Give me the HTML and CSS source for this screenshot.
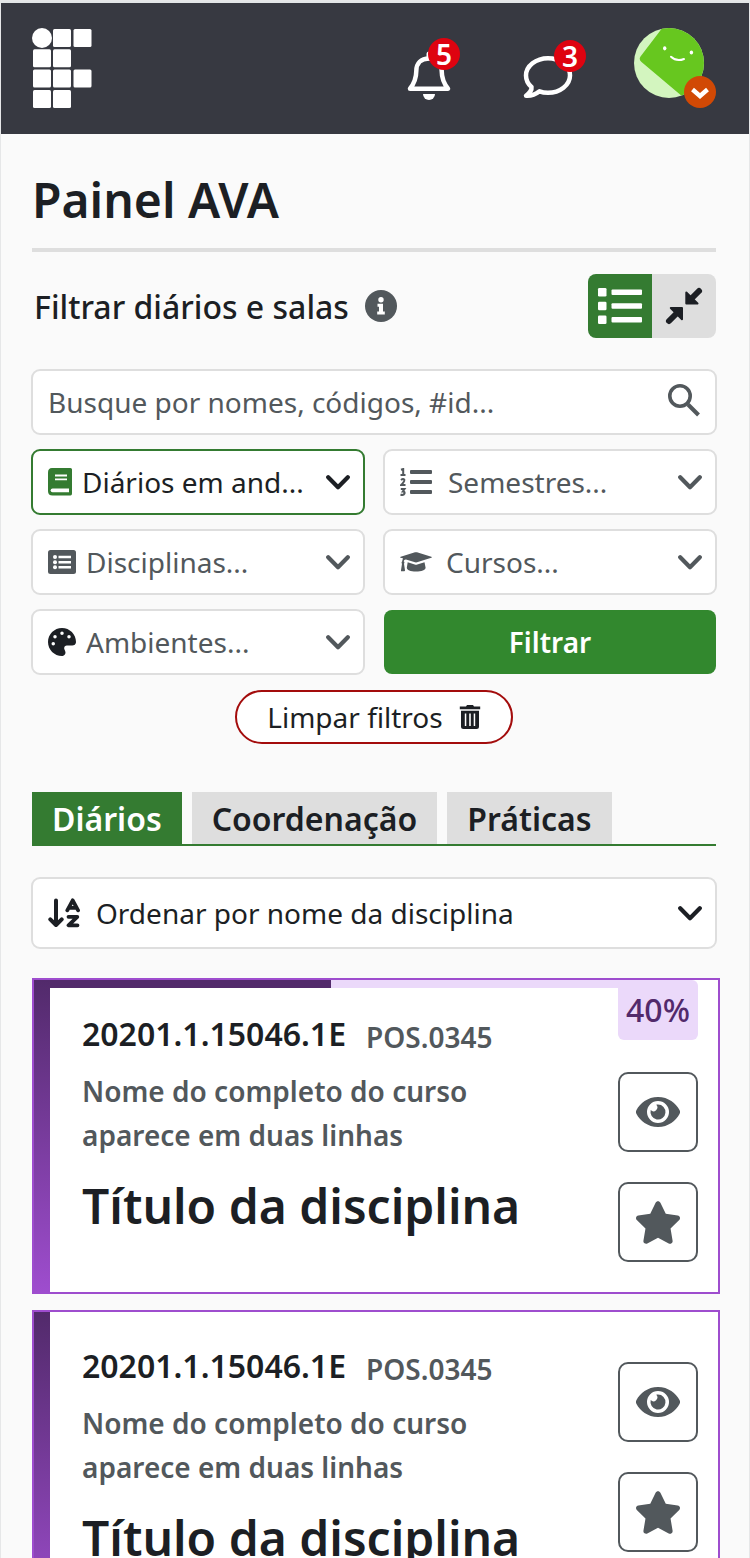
FILE: index.html
```html
<!DOCTYPE html>
<html lang="pt-BR">
<head>
<meta charset="utf-8">
<meta name="viewport" content="width=device-width, initial-scale=1">
<title>Painel AVA</title>
<link rel="stylesheet" href="styles.css">
</head>
<body>
<svg class="sprite" aria-hidden="true">
  <symbol id="chevron" viewBox="0 0 24 15"><path d="M2.200 2.300 12 12.200 21.800 2.300" fill="none" stroke="currentColor" stroke-width="4.200" stroke-linecap="round" stroke-linejoin="round"/></symbol>
  <symbol id="eye" viewBox="0 0 44 30"><path fill="currentColor" fill-rule="evenodd" d="M22 0C11.500 0 4 6.500.500 13a4.300 4.300 0 0 0 0 4C4 23.500 11.500 30 22 30s18-6.500 21.500-13a4.300 4.300 0 0 0 0-4C40 6.500 32.500 0 22 0Zm0 26a11 11 0 1 1 0-22 11 11 0 0 1 0 22Z"/><path fill="currentColor" d="M22 7.500a7.500 7.500 0 1 1-7.300 5.600 3.800 3.800 0 0 0 5.500-5.300c.6-.2 1.200-.3 1.800-.3Z"/></symbol>
  <symbol id="star" viewBox="0 0 576 512"><path fill="currentColor" d="M316.900 18C311.600 7 300.400 0 288.100 0s-23.400 7-28.800 18L195 150.300 51.400 171.500c-12 1.800-22 10.200-25.700 21.700s-.7 24.200 7.900 32.700L137.800 329 113.200 474.700c-2 12 3 24.200 12.900 31.300s23 8 33.800 2.300l128.300-68.500 128.300 68.500c10.800 5.700 23.900 4.900 33.800-2.300s14.900-19.300 12.900-31.300L438.500 329 542.700 225.900c8.600-8.500 11.700-21.200 7.900-32.700s-13.700-19.900-25.700-21.700L381.200 150.300 316.900 18z"/></symbol>
</svg>

<div class="app">
  <header class="topbar">
    <a class="logo" href="#" aria-label="Início">
      <svg width="60" height="80" viewBox="0 0 60 80" fill="#fff">
        <circle cx="10" cy="10" r="10"/>
        <rect x="21" y="1" width="18" height="18" rx="1.500"/><rect x="41.500" y="1" width="18" height="18" rx="1.500"/>
        <rect x="1" y="21.300" width="18" height="18" rx="1.500"/><rect x="21" y="21.300" width="18" height="18" rx="1.500"/>
        <rect x="1" y="41.600" width="18" height="18" rx="1.500"/><rect x="21" y="41.600" width="18" height="18" rx="1.500"/><rect x="41.500" y="41.600" width="18" height="18" rx="1.500"/>
        <rect x="1" y="62" width="18" height="18" rx="1.500"/><rect x="21" y="62" width="18" height="18" rx="1.500"/>
      </svg>
    </a>
    <nav class="actions" aria-label="Conta">
      <button class="action" type="button" aria-label="Notificações">
        <svg width="66" height="80" viewBox="0 0 66 80" fill="none">
          <path d="M4 60.700C8.500 55 10.300 50 10.300 43 10.300 35 15 30.500 23 30.500S35.700 35 35.700 43C35.700 50 37.500 55 42 60.700Z" stroke="#fff" stroke-width="4.500" stroke-linejoin="round"/>
          <path d="M23 30V26" stroke="#fff" stroke-width="5" stroke-linecap="round"/>
          <path d="M17 66h12a6 6 0 0 1-12 0Z" fill="#fff"/>
        </svg>
        <span class="count count-bell">5</span>
      </button>
      <button class="action" type="button" aria-label="Mensagens">
        <svg width="66" height="80" viewBox="0 0 66 80" fill="none">
          <path d="M11.500 59C8 56 6 52 6 47.500 6 38 16 30.200 28 30.200S50 38 50 47.500 40 64.800 28 64.800C25 64.800 22 64.300 19.500 63.300 15.500 66.500 10.500 68 6 67.700 9 65.500 12 62.500 11.500 59Z" stroke="#fff" stroke-width="4.500" stroke-linejoin="round"/>
        </svg>
        <span class="count count-chat">3</span>
      </button>
      <button class="profile" type="button" aria-label="Perfil">
        <svg width="82" height="80" viewBox="0 0 82 80">
          <defs><clipPath id="face"><circle cx="35" cy="35" r="35"/></clipPath></defs>
          <g clip-path="url(#face)">
            <rect width="70" height="70" fill="#d3f5bf"/>
            <path d="M29-1 6.500 28.500Q4.500 31.500 7.500 34L49 69H72V-1Z" fill="#67c71f"/>
          </g>
          <ellipse cx="30.700" cy="20.300" rx="1.700" ry="2.100" fill="#fff"/><ellipse cx="57.400" cy="24.500" rx="1.700" ry="2.100" fill="#fff"/>
          <path d="M37 28.800Q42.500 34 50 31" fill="none" stroke="#fff" stroke-width="2" stroke-linecap="round"/>
          <circle cx="66" cy="64" r="16" fill="#d14905"/>
          <path d="M58.500 61.500 66 68 73.500 61.500" fill="none" stroke="#fff" stroke-width="4.400"/>
        </svg>
      </button>
    </nav>
  </header>

  <main class="content">
    <h1 class="page-title">Painel AVA</h1>

    <div class="filter-head">
      <h2 class="filter-title">Filtrar diários e salas</h2>
      <button class="info" type="button" aria-label="Informações">
        <svg width="32" height="32" viewBox="0 0 32 32"><circle cx="16" cy="16" r="16" fill="#52585c"/><circle cx="16" cy="9.800" r="2.700" fill="#fff"/><path d="M12.500 13.800H18V21.500H19.800V24.600H12.200V21.500H14V16.800H12.500Z" fill="#fff"/></svg>
      </button>
      <div class="view-toggle" role="group" aria-label="Modo de exibição">
        <button class="view is-active" type="button" aria-label="Lista" aria-pressed="true">
          <svg width="64" height="64" viewBox="0 0 64 64" fill="#fff"><rect x="10" y="14" width="8.500" height="8.500" rx="1.300"/><rect x="10" y="27.800" width="8.500" height="8.500" rx="1.300"/><rect x="10" y="41.500" width="8.500" height="8.500" rx="1.300"/><rect x="23.500" y="15.500" width="30.500" height="5.500" rx="1"/><rect x="23.500" y="29.300" width="30.500" height="5.500" rx="1"/><rect x="23.500" y="43" width="30.500" height="5.500" rx="1"/></svg>
        </button>
        <button class="view" type="button" aria-label="Compacto" aria-pressed="false">
          <svg width="64" height="64" viewBox="0 0 64 64" fill="#1c1f24" stroke="#1c1f24"><path d="M34.300 18.500 45.500 29.500H34.300Z" stroke-width="2" stroke-linejoin="round"/><path d="M38.500 25.500 47 17" stroke-width="6" stroke-linecap="round"/><path d="M30 34V45.200L18.800 34Z" stroke-width="2" stroke-linejoin="round"/><path d="M25.500 38.500 17 47" stroke-width="6" stroke-linecap="round"/></svg>
        </button>
      </div>
    </div>

    <form class="filters" onsubmit="return false">
      <label class="field search">
        <input class="control" type="search" aria-label="Buscar" placeholder="Busque por nomes, códigos, #id...">
        <svg class="icon" width="34" height="36" viewBox="0 0 34 36" fill="none" stroke="currentColor"><circle cx="12" cy="12" r="10.200" stroke-width="3.600"/><path d="M20 20.500 30.500 31" stroke-width="4"/></svg>
      </label>
      <label class="field is-selected">
        <svg class="icon book" width="24" height="28" viewBox="0 0 24 28"><path fill="currentColor" d="M4 0H22.500Q24 0 24 1.500V25.500Q24 27.500 22.500 27.500H4.500Q0 27.500 0 23V4.500Q0 0 4 0Z"/><path d="M7 7.500H19M7 11.300H19" stroke="#fff" stroke-width="1.800"/><path d="M4.500 20.500H21V24.200H4.500A1.850 1.850 0 0 1 4.500 20.500Z" fill="#fff"/></svg>
        <select class="control" aria-label="Situação"><option>Diários em and...</option></select>
        <svg class="chevron" width="24" height="15"><use href="#chevron"/></svg>
      </label>
      <label class="field">
        <svg class="icon wider" width="32" height="28" viewBox="0 0 32 28" fill="currentColor"><rect x="10" y="2" width="22" height="4" rx="1"/><rect x="10" y="12" width="22" height="4" rx="1"/><rect x="10" y="22" width="22" height="4" rx="1"/><path d="M1 1.800 3.200 1V7M.500 7H5.500M1 12Q3 10.300 4.200 11.500 5 13 1.200 17H5.500M.800 21H4.500L2.800 23.500Q5 23.500 4.500 25.500 3.500 27.700.500 26.500" fill="none" stroke="currentColor" stroke-width="2"/></svg>
        <select class="control" aria-label="Semestres"><option>Semestres...</option></select>
        <svg class="chevron" width="24" height="15"><use href="#chevron"/></svg>
      </label>
      <label class="field">
        <svg class="icon" width="28" height="24" viewBox="0 0 28 24"><rect width="28" height="24" rx="2.500" fill="currentColor"/><path d="M10.500 7H23M10.500 12.200H23M10.500 17.300H23" stroke="#fff" stroke-width="2.600"/><g fill="#fff"><circle cx="7" cy="7" r="2"/><circle cx="7" cy="12.200" r="2"/><circle cx="7" cy="17.300" r="2"/></g></svg>
        <select class="control" aria-label="Disciplinas"><option>Disciplinas...</option></select>
        <svg class="chevron" width="24" height="15"><use href="#chevron"/></svg>
      </label>
      <label class="field">
        <svg class="icon wide" width="32" height="20" viewBox="0 0 32 20" fill="currentColor"><path d="M15 .300Q16 0 17 .300L31.300 4.700Q32.500 5.200 31.300 5.700L17 10.300Q16 10.600 15 10.300L6 7.500Q4 7.300 3.700 9.300 5 10.300 4 11.800L5 18.300Q5.100 19.300 4.200 19.300H1.500Q.800 19.300 1 18.300L2 11.800Q1 10.500 2.200 9.300 2.200 7.500 3.200 6.500L.700 5.700Q-.500 5.200.700 4.700Z"/><path d="M7.700 10.300 14.700 12.500Q16 12.900 17.300 12.500L24.500 10.300 25.600 15.800C25.600 18 21.500 19.600 16 19.600S6.800 18 6.800 15.800Z"/></svg>
        <select class="control" aria-label="Cursos"><option>Cursos...</option></select>
        <svg class="chevron" width="24" height="15"><use href="#chevron"/></svg>
      </label>
      <label class="field">
        <svg class="icon dark" width="28" height="28" viewBox="0 0 512 512"><path fill="currentColor" d="M512 256c0 .900 0 1.800 0 2.700c-.4 36.500-33.600 61.300-70.100 61.300L344 320c-26.500 0-48 21.500-48 48c0 3.400 .4 6.700 1 9.900c2.100 10.200 6.500 20 10.800 29.900c6.100 13.800 12.100 27.500 12.100 42c0 31.800-21.600 60.700-53.400 62c-3.500 .1-7 .2-10.600 .2C114.600 512 0 397.400 0 256S114.600 0 256 0S512 114.600 512 256zM128 288a32 32 0 1 0 -64 0 32 32 0 1 0 64 0zm0-96a32 32 0 1 0 0-64 32 32 0 1 0 0 64zM288 96a32 32 0 1 0 -64 0 32 32 0 1 0 64 0zm96 96a32 32 0 1 0 0-64 32 32 0 1 0 0 64z"/></svg>
        <select class="control" aria-label="Ambientes"><option>Ambientes...</option></select>
        <svg class="chevron" width="24" height="15"><use href="#chevron"/></svg>
      </label>
      <button class="submit" type="submit">Filtrar</button>
      <button class="clear" type="reset">Limpar filtros
        <svg width="22" height="24" viewBox="0 0 22 24" fill="#1c1f24"><path d="M.800 1.500H7L8 0H14L15 1.500H21.200V4.200H.800Z"/><path fill-rule="evenodd" d="M2 5.700H20V21.500Q20 24 17.500 24H4.500Q2 24 2 21.500ZM5.800 8.500V21H7.300V8.500ZM10.200 8.500V21H11.800V8.500ZM14.700 8.500V21H16.200V8.500Z"/></svg>
      </button>
    </form>

    <div class="tabs" role="tablist">
      <button class="tab is-active" type="button" role="tab" aria-selected="true">Diários</button>
      <button class="tab" type="button" role="tab" aria-selected="false">Coordenação</button>
      <button class="tab" type="button" role="tab" aria-selected="false">Práticas</button>
    </div>

    <label class="field sort">
      <svg class="icon wider" width="32" height="30" viewBox="0 0 32 30" fill="none" stroke="currentColor" stroke-linecap="round" stroke-linejoin="round"><path d="M8 2.500V26M2.300 21.300 8 27 13.700 21.300" stroke-width="4"/><path d="M19.300 12.300 24.700 2.300 30.100 12.300M21.500 9.800H28M20.500 18.800H29.300L20.500 27.300H29.500" stroke-width="3.800"/></svg>
      <select class="control" aria-label="Ordenação"><option>Ordenar por nome da disciplina</option></select>
      <svg class="chevron" width="24" height="15"><use href="#chevron"/></svg>
    </label>

    <section class="cards" aria-label="Diários">
      <article class="card">
        <div class="card-progress"><div class="card-progress-bar" style="width: 42%"></div></div>
        <div class="card-body">
          <p class="card-codes"><span class="code">20201.1.15046.1E</span><span class="subcode">POS.0345</span></p>
          <p class="course">Nome do completo do curso aparece em duas linhas</p>
          <h3 class="subject">Título da disciplina</h3>
        </div>
        <div class="card-side has-percent">
          <span class="percent">40%</span>
          <button class="square" type="button" aria-label="Visibilidade"><svg width="44" height="30"><use href="#eye"/></svg></button>
          <button class="square" type="button" aria-label="Favoritar"><svg width="48" height="43"><use href="#star"/></svg></button>
        </div>
      </article>
      <article class="card">
        <div class="card-body">
          <p class="card-codes"><span class="code">20201.1.15046.1E</span><span class="subcode">POS.0345</span></p>
          <p class="course">Nome do completo do curso aparece em duas linhas</p>
          <h3 class="subject">Título da disciplina</h3>
        </div>
        <div class="card-side">
          <button class="square" type="button" aria-label="Visibilidade"><svg width="44" height="30"><use href="#eye"/></svg></button>
          <button class="square" type="button" aria-label="Favoritar"><svg width="48" height="43"><use href="#star"/></svg></button>
        </div>
      </article>
    </section>
  </main>
</div>
</body>
</html>
```

FILE: styles.css
```css
:root {
  --ink: #1c1f24;
  --muted: #52585c;
  --line: #dedede;
  --green: #347b31;
  --purple: #9e4dce;
  --purple-dark: #522a6b;
  --purple-light: #ebd9fa;
}

* { box-sizing: border-box; }

body {
  margin: 0;
  background: #fafafa;
  color: var(--ink);
  font-family: "Noto Sans", sans-serif;
  font-size: 28px;
}

h1, h2, h3, p { margin: 0; }

button, input, select {
  margin: 0;
  padding: 0;
  border: 0;
  background: none;
  color: inherit;
  font: inherit;
}

button, select { cursor: pointer; }
svg { display: block; flex: none; }
.sprite { position: absolute; width: 0; height: 0; }

.app {
  height: 100vh;
  overflow: hidden auto;
  scrollbar-width: none;
  border: 1px solid #e6e7e8;
  border-bottom: 0;
}

/* Top bar */
.topbar {
  display: flex;
  justify-content: space-between;
  padding: 25px 33px 26px 31px;
  border-top: 2px solid #e3e6e7;
  background: #373941;
}

.actions { display: flex; gap: 48px; }
.action { position: relative; }

.count {
  position: absolute;
  width: 32px;
  height: 32px;
  border-radius: 50%;
  background: #de0310;
  color: #fff;
  font-weight: 600;
  line-height: 32px;
  text-align: center;
}

.count-bell { left: 22px; top: 10px; }
.count-chat { left: 34px; top: 12px; }

/* Filters */
.content { padding: 34px 33px 32px 31px; }

.page-title {
  padding-bottom: 16px;
  border-bottom: 4px solid var(--line);
  font-size: 48px;
  font-weight: 600;
  line-height: 64px;
}

.filter-head {
  display: flex;
  align-items: center;
  gap: 16px;
  margin: 22px 0 32px;
}

.filter-title { padding-left: 2px; font-size: 32px; font-weight: 500; }

.view-toggle {
  display: flex;
  margin-left: auto;
  overflow: hidden;
  border-radius: 8px;
}

.view { background: var(--line); }
.view.is-active { background: var(--green); }

.filters {
  display: grid;
  grid-template-columns: 1fr 1fr;
  gap: 16px 20px;
}

.field {
  display: flex;
  align-items: center;
  gap: 10px;
  min-width: 0;
  height: 64px;
  padding: 0 14px 0 16px;
  outline: 2px solid var(--line);
  outline-offset: -1px;
  border-radius: 8px;
  background: #fff;
  color: var(--muted);
}

.field.is-selected { outline-color: var(--green); color: var(--ink); }
.search { grid-column: 1 / -1; }

.control {
  flex: 1;
  min-width: 0;
  height: 100%;
  outline: 0;
  appearance: none;
}

.control::placeholder { color: var(--muted); opacity: 1; }

select.control { margin-right: -34px; padding-right: 34px; }
.chevron { pointer-events: none; position: relative; }
.icon.wide { margin-right: 4px; }
.icon.wider { margin-right: 6px; }
.icon.dark { color: var(--ink); }
.icon.book { color: var(--green); }

.submit {
  border-radius: 8px;
  background: #32882e;
  color: #fff;
  font-weight: 600;
}

.clear {
  display: flex;
  grid-column: 1 / -1;
  justify-self: center;
  align-items: center;
  gap: 16px;
  height: 54px;
  padding: 0 30px;
  border: 2px solid #a30c0c;
  border-radius: 27px;
  background: #fff;
}

/* Tabs */
.tabs {
  display: flex;
  gap: 10px;
  margin: 48px 0 32px;
  border-bottom: 2px solid var(--green);
}

.tab {
  height: 52px;
  padding: 0 20px;
  background: var(--line);
  font-size: 32px;
  font-weight: 600;
}

.tab.is-active { background: var(--green); color: #fff; }
.sort { height: 70px; color: var(--ink); }

/* Cards */
.cards {
  display: grid;
  gap: 16px;
  margin: 30px -4px 0 0;
}

.card {
  position: relative;
  display: flex;
  min-height: 316px;
  border: 2px solid var(--purple);
  background: #fff;
}

.card::before {
  content: "";
  flex: none;
  width: 16px;
  background: linear-gradient(var(--purple-dark), var(--purple));
}

.card-progress {
  position: absolute;
  inset: 0 0 auto 16px;
  height: 8px;
  background: linear-gradient(var(--purple-light), var(--purple-light)) left / calc(100% - 40px) no-repeat;
}

.card-progress-bar { height: 100%; background: var(--purple-dark); }

.card-body { flex: 1; padding: 32px; }

.card-codes {
  display: flex;
  align-items: flex-end;
  gap: 20px;
  margin-bottom: 13px;
  font-weight: 600;
}

.code { font-size: 32px; line-height: 44px; }
.subcode { color: var(--muted); line-height: 38px; }

.course {
  max-width: 420px;
  margin-bottom: 16px;
  color: var(--muted);
  font-weight: 600;
  line-height: 44px;
}

.subject { font-size: 48px; font-weight: 600; line-height: 66px; }

.card-side {
  position: relative;
  display: flex;
  flex: none;
  flex-direction: column;
  gap: 30px;
  padding: 50px 20px 30px 0;
}

.card-side.has-percent { padding-top: 0; }

.percent {
  height: 60px;
  margin-bottom: 2px;
  border-radius: 6px;
  background: var(--purple-light);
  color: var(--purple-dark);
  font-size: 32px;
  font-weight: 500;
  line-height: 60px;
  text-align: center;
}

.square {
  display: grid;
  place-items: center;
  width: 80px;
  height: 80px;
  border: 2px solid var(--muted);
  border-radius: 10px;
  color: var(--muted);
}
```
